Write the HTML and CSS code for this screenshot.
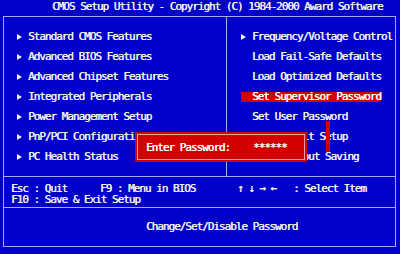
FILE: index.html
```html
<!DOCTYPE html>
<html lang="en">
<head>
    <meta charset="UTF-8">
    <title>CMOS Setup Utility</title>
    <link rel="stylesheet" href="styles.css">
</head>
<body>
    <div class="screen">
        <div class="title">CMOS Setup Utility - Copyright (C) 1984-2000 Award Software</div>

        <div class="frame">
            <div class="menus">
                <ul class="menu menu-left">
                    <li class="sub">Standard CMOS Features</li>
                    <li class="sub">Advanced BIOS Features</li>
                    <li class="sub">Advanced Chipset Features</li>
                    <li class="sub">Integrated Peripherals</li>
                    <li class="sub">Power Management Setup</li>
                    <li class="sub">PnP/PCI Configurations</li>
                    <li class="sub">PC Health Status</li>
                </ul>
                <ul class="menu menu-right">
                    <li class="sub">Frequency/Voltage Control</li>
                    <li>Load Fail-Safe Defaults</li>
                    <li>Load Optimized Defaults</li>
                    <li class="active">Set Supervisor Password</li>
                    <li>Set User Password</li>
                    <li>Save &amp; Exit Setup</li>
                    <li>Exit Without Saving</li>
                </ul>
            </div>

            <div class="keys">
                <div class="keys-row">
                    <span>Esc : Quit</span>
                    <span>F9 : Menu in BIOS</span>
                    <span>↑ ↓ → ←   : Select Item</span>
                </div>
                <div class="keys-row">
                    <span>F10 : Save &amp; Exit Setup</span>
                </div>
            </div>

            <div class="help">Change/Set/Disable Password</div>
        </div>

        <!-- password prompt sits over the menu -->
        <div class="dialog">
            <div class="dialog-inner">
                <span>Enter Password:</span>
                <span class="stars">******</span>
            </div>
        </div>

        <div class="pointer"></div>
    </div>
</body>
</html>
```

FILE: styles.css
```css
:root {
    --bios-blue: #0000c8;
    --bios-line: #a8a8f8;
    --bios-text: #f0f0f0;
    --bios-red: #d20000;
}

* {
    margin: 0;
    padding: 0;
    box-sizing: border-box;
}

body {
    background-color: var(--bios-blue);
    color: var(--bios-text);
    font-family: 'DejaVu Sans Mono', 'Liberation Mono', monospace;
    font-size: 11px;
    letter-spacing: -1.02px;
    text-shadow: 0.4px 0 0 currentColor;
    overflow: hidden;
}

.screen {
    position: relative;
    width: 400px;
    height: 254px;
}

.title {
    height: 16px;
    line-height: 14px;
    padding-left: 52px;
    white-space: pre;
}

.frame {
    margin-left: 3px;
    width: 393px;
    border: 1px solid var(--bios-line);
}

.menus {
    display: grid;
    grid-template-columns: 223px 1fr;
    height: 160px;
    border-bottom: 1px solid var(--bios-line);
}

.menu {
    list-style: none;
    display: flex;
    flex-direction: column;
    gap: 10px;
    padding-top: 15px;
}

.menu li {
    display: flex;
    align-items: center;
    gap: 6px;
    height: 10px;
    line-height: 10px;
    white-space: pre;
}

.menu li.sub::before {
    content: "";
    border-left: 5px solid var(--bios-text);
    border-top: 3px solid transparent;
    border-bottom: 3px solid transparent;
}

.menu-left {
    padding-left: 13px;
    border-right: 1px solid var(--bios-line);
}

.menu-right {
    padding-left: 14px;
}

.menu-right li {
    width: 140px;
}

.menu-right li:not(.sub) {
    padding-left: 11px;
}

.menu-right li.active {
    background-color: var(--bios-red);
    color: #ffffff;
}

.keys {
    height: 31px;
    padding: 6px 0 0 7px;
    line-height: 11px;
    border-bottom: 1px solid var(--bios-line);
}

.keys-row {
    display: grid;
    grid-template-columns: 89px 137px 1fr;
}

.keys-row span {
    white-space: pre;
}

.help {
    height: 38px;
    line-height: 38px;
    padding-left: 142px;
}

.dialog {
    position: absolute;
    left: 135px;
    top: 132px;
    width: 172px;
    height: 30px;
    background-color: var(--bios-red);
    padding: 2px;
}

.dialog-inner {
    height: 100%;
    border: 1px solid #f09a9a;
    display: flex;
    align-items: center;
    gap: 23px;
    padding-left: 8px;
    color: #ffffff;
}

.pointer {
    position: absolute;
    left: 326px;
    top: 121px;
    width: 4px;
    height: 31px;
    background-color: var(--bios-red);
}
```
